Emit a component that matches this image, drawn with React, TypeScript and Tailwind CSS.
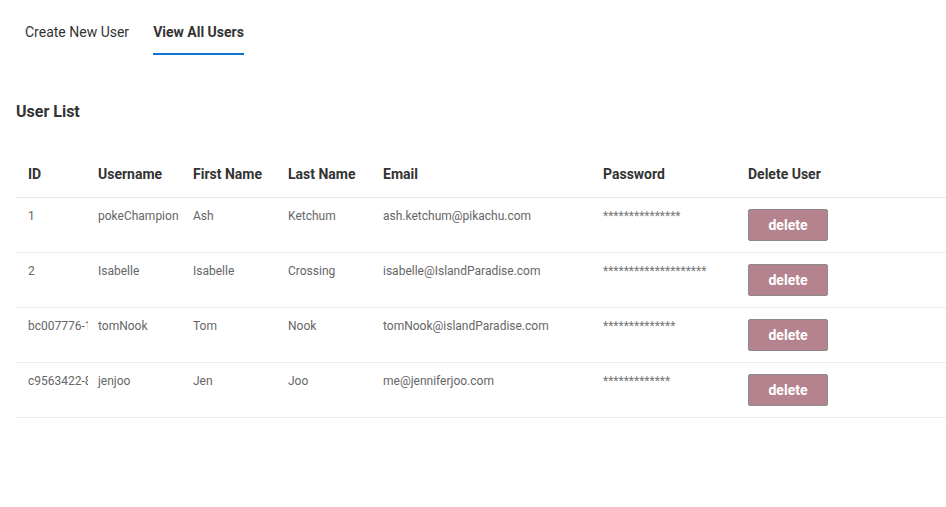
import React from 'react';

type User = {
  id: string;
  username: string;
  firstName: string;
  lastName: string;
  email: string;
  password: string;
};

const users: User[] = [
  { id: '1', username: 'pokeChampion', firstName: 'Ash', lastName: 'Ketchum', email: 'ash.ketchum@pikachu.com', password: '***************' },
  { id: '2', username: 'Isabelle', firstName: 'Isabelle', lastName: 'Crossing', email: 'isabelle@IslandParadise.com', password: '********************' },
  { id: 'bc007776-1a2b-4c3d', username: 'tomNook', firstName: 'Tom', lastName: 'Nook', email: 'tomNook@islandParadise.com', password: '**************' },
  { id: 'c9563422-8e7f-4a1b', username: 'jenjoo', firstName: 'Jen', lastName: 'Joo', email: 'me@jenniferjoo.com', password: '*************' },
];

const cols = 'grid grid-cols-[70px_95px_95px_95px_220px_145px_1fr]';

export default function App() {
  return (
    <div className="w-full min-h-[507px] bg-white text-[#333] font-['Roboto',sans-serif]">
      <nav className="flex pl-[13px]">
        <button className="mx-3 pt-[22px] pb-[11px] border-b-2 border-transparent text-sm leading-5 text-[#333]">
          Create New User
        </button>
        <button className="mx-3 pt-[22px] pb-[11px] border-b-2 border-[#0d74d1] text-sm leading-5 font-bold text-[#333]">
          View All Users
        </button>
      </nav>

      <h2 className="mt-[45px] pl-4 text-base leading-6 font-bold text-[#333]">User List</h2>

      <div className="mt-[26px] pl-4">
        <div className={`${cols} h-[48px] items-center border-b border-[#e8e8e8] text-sm font-bold text-[#333]`}>
          <div className="pl-3">ID</div>
          <div className="pl-3">Username</div>
          <div className="pl-3">First Name</div>
          <div className="pl-3">Last Name</div>
          <div className="pl-3">Email</div>
          <div className="pl-3">Password</div>
          <div className="pl-3">Delete User</div>
        </div>

        {users.map((u) => (
          <div key={u.id} className={`${cols} h-[55px] items-start border-b border-[#ececec] text-xs leading-4 text-[#666]`}>
            <div className="pl-3 pt-[10px]">
              <div className="w-[60px] overflow-hidden whitespace-nowrap">{u.id}</div>
            </div>
            <div className="pl-3 pt-[10px]">{u.username}</div>
            <div className="pl-3 pt-[10px]">{u.firstName}</div>
            <div className="pl-3 pt-[10px]">{u.lastName}</div>
            <div className="pl-3 pt-[10px]">{u.email}</div>
            <div className="pl-3 pt-[10px] text-[#777]">{u.password}</div>
            <div className="pl-3 pt-[11px]">
              <button className="w-20 h-8 rounded-[2px] border border-[#8c8c8c] bg-[#b5838d] text-sm leading-4 font-bold text-white">
                delete
              </button>
            </div>
          </div>
        ))}
      </div>
    </div>
  );
}
